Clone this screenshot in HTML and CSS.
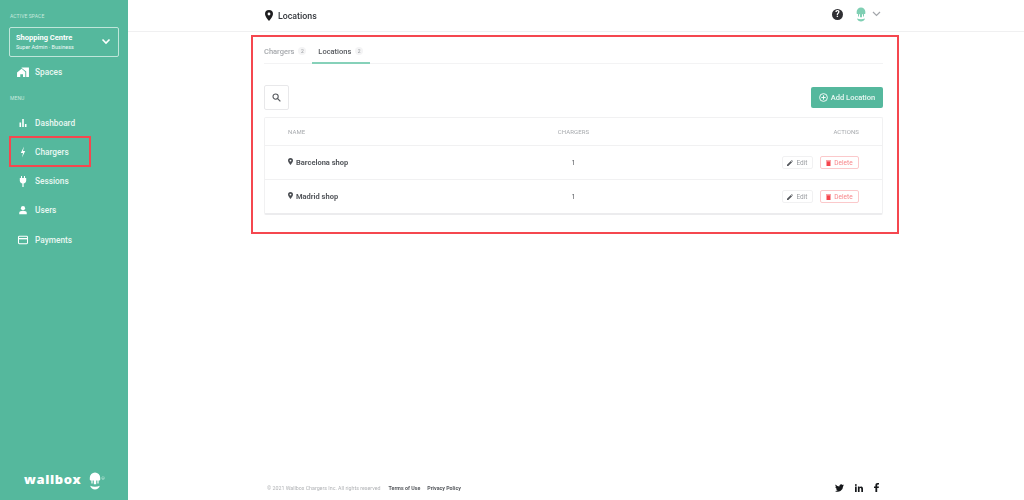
FILE: index.html
```html
<!DOCTYPE html>
<html lang="en">
<head>
<meta charset="utf-8">
<title>Locations</title>
<link rel="stylesheet" href="styles.css">
</head>
<body>
<div class="app">
  <aside class="sidebar">
    <div class="side-label first">ACTIVE SPACE</div>
    <div class="space">
      <div>
        <div class="space-name">Shopping Centre</div>
        <div class="space-role">Super Admin · Business</div>
      </div>
      <svg class="space-chev" width="10" height="7" viewBox="0 0 10 7"><path d="M1.500 1.500 5 5l3.500-3.500" fill="none" stroke="#fff" stroke-width="1.600"/></svg>
    </div>
    <a class="nav spaces"><svg class="nav-ico" width="12" height="11" viewBox="0 0 13 12"><path d="M0 6 5 2l4 3.500V11H6.500V8h-3v3H0zM5 0.500h8V11h-3V5L5 1z" fill="#fff"/></svg>Spaces</a>
    <div class="side-label menu">MENU</div>
    <a class="nav"><svg class="nav-ico" width="12" height="8" viewBox="0 0 12 8"><path d="M2.500 3.500h1.600V8H2.500zM5.200 0h1.600v8H5.200zM7.900 5h1.600v3H7.900z" fill="#fff"/></svg>Dashboard</a>
    <a class="nav"><svg class="nav-ico" width="12" height="12" viewBox="0 0 12 12"><path d="M7 0.500 3.800 7H6l-1 4.500L8.200 5H6z" fill="#fff"/></svg>Chargers</a>
    <a class="nav"><svg class="nav-ico" width="12" height="11" viewBox="-1.500 0 15 13.750"><path d="M3.500 0h1.300v2.500h2.400V0h1.300v2.500H10V6C10 8 8 9.200 6.800 9.400V13.700H5.200V9.400C4 9.200 2 8 2 6V2.500h1.500z" fill="#fff"/></svg>Sessions</a>
    <a class="nav"><svg class="nav-ico" width="12" height="12" viewBox="-2 -2 16 16"><circle cx="6" cy="3.500" r="2.800" fill="#fff"/><path d="M1 11.500V9.500C1 8 3.500 7 6 7s5 1 5 2.500v2z" fill="#fff"/></svg>Users</a>
    <a class="nav"><svg class="nav-ico" width="12" height="12" viewBox="-.5 -.5 13 13"><rect x="1.100" y="2" width="9.800" height="8" rx="1" fill="none" stroke="#fff" stroke-width="1.100"/><path d="M1 3.800h10v1.500H1z" fill="#fff"/></svg>Payments</a>
    <div class="brand">
      <span class="brand-word">wallbox</span>
      <svg width="12" height="18" viewBox="0 0 15 22"><path d="M1 9V7a6.500 6.500 0 0 1 13 0v2c0 1-1 1.500-2 1.300V14h-1.500v-3.500H9V15H6v-4.500H4.500V14H3v-3.700C2 10.500 1 10 1 9z" fill="#fff"/><path d="M1.500 17c3.500 1.500 8.500 1.500 12 0-.5 3-3.500 4.500-6 4.500s-5.500-1.500-6-4.500z" fill="#fff"/></svg>
      <span class="brand-r">®</span>
    </div>
  </aside>
  <div class="main">
    <header class="topbar">
      <div class="page-title">
        <svg width="8" height="11" viewBox="0 0 8 11"><path fill-rule="evenodd" d="M4 0a4 4 0 0 1 4 4c0 2.500-2.500 5-4 7-1.500-2-4-4.500-4-7a4 4 0 0 1 4-4zm0 2.600a1.400 1.400 0 1 0 0 2.800 1.400 1.400 0 0 0 0-2.800z" fill="#1d1d1f"/></svg>
        <span>Locations</span>
      </div>
      <div class="top-actions">
        <span class="help">?</span>
        <svg class="avatar" width="10" height="15" viewBox="0 0 15 22"><path d="M1 9V7a6.500 6.500 0 0 1 13 0v2c0 1-1 1.500-2 1.300V14h-1.500v-3.500H9V15H6v-4.500H4.500V14H3v-3.700C2 10.500 1 10 1 9z" fill="#7fcfb3"/><path d="M1.500 17c3.500 1.500 8.500 1.500 12 0-.5 3-3.500 4.500-6 4.500s-5.500-1.500-6-4.500z" fill="#7fcfb3"/></svg>
        <svg width="9" height="6" viewBox="0 0 9 6"><path d="M1 1l3.500 3.500L8 1" fill="none" stroke="#a3a6ab" stroke-width="1.200"/></svg>
      </div>
    </header>
    <main class="content">
      <nav class="tabs">
        <a class="tab">Chargers <span class="count">2</span></a>
        <a class="tab active">Locations <span class="count">2</span></a>
      </nav>
      <div class="toolbar">
        <button class="search-btn"><svg width="9" height="9" viewBox="0 0 10 10"><circle cx="4" cy="4" r="2.900" fill="none" stroke="#55585d" stroke-width="1.200"/><path d="M6 6l3.300 3.300" stroke="#55585d" stroke-width="1.400"/></svg></button>
        <button class="add-btn"><svg width="9" height="9" viewBox="0 0 9 9"><circle cx="4.500" cy="4.500" r="3.900" fill="none" stroke="#fff" stroke-width=".9"/><path d="M4.500 2.300v4.400M2.300 4.500h4.400" stroke="#fff" stroke-width=".9"/></svg>Add Location</button>
      </div>
      <section class="table">
        <div class="row head">
          <div class="c-name">NAME</div>
          <div class="c-chargers">CHARGERS</div>
          <div class="c-actions">ACTIONS</div>
        </div>
        <div class="row item">
          <div class="c-name loc"><svg width="5" height="7" viewBox="0 0 8 11"><path fill-rule="evenodd" d="M4 0a4 4 0 0 1 4 4c0 2.500-2.500 5-4 7-1.500-2-4-4.500-4-7a4 4 0 0 1 4-4zm0 2.600a1.400 1.400 0 1 0 0 2.800 1.400 1.400 0 0 0 0-2.800z" fill="#4a4d52"/></svg>Barcelona shop</div>
          <div class="c-chargers num">1</div>
          <div class="c-actions btns">
            <button class="act edit"><svg width="6" height="6" viewBox="0 0 6 6"><path d="M0 6V4.700L3.800.9 5.100 2.200 1.300 6zM4.200.5 4.700 0 6 1.300l-.5.500z" fill="#55585d"/></svg>Edit</button>
            <button class="act del"><svg width="5" height="6" viewBox="0 0 5 6"><path d="M0 .6h5v.7H0zM.5 1.600h4V6h-4z" fill="#f5454d"/></svg>Delete</button>
          </div>
        </div>
        <div class="row item">
          <div class="c-name loc"><svg width="5" height="7" viewBox="0 0 8 11"><path fill-rule="evenodd" d="M4 0a4 4 0 0 1 4 4c0 2.500-2.500 5-4 7-1.500-2-4-4.500-4-7a4 4 0 0 1 4-4zm0 2.600a1.400 1.400 0 1 0 0 2.800 1.400 1.400 0 0 0 0-2.800z" fill="#4a4d52"/></svg>Madrid shop</div>
          <div class="c-chargers num">1</div>
          <div class="c-actions btns">
            <button class="act edit"><svg width="6" height="6" viewBox="0 0 6 6"><path d="M0 6V4.700L3.800.9 5.100 2.200 1.300 6zM4.200.5 4.700 0 6 1.300l-.5.500z" fill="#55585d"/></svg>Edit</button>
            <button class="act del"><svg width="5" height="6" viewBox="0 0 5 6"><path d="M0 .6h5v.7H0zM.5 1.600h4V6h-4z" fill="#f5454d"/></svg>Delete</button>
          </div>
        </div>
      </section>
    </main>
    <footer class="footer">
      <div class="legal">
        <span>© 2021 Wallbox Chargers Inc. All rights reserved</span>
        <a class="legal-link first-link">Terms of Use</a>
        <a class="legal-link">Privacy Policy</a>
      </div>
      <div class="social">
        <svg width="9" height="8" viewBox="0 0 24 20"><path d="M24 2.400c-.9.400-1.800.7-2.800.8 1-.6 1.800-1.600 2.200-2.700-1 .6-2 1-3.100 1.200A4.900 4.900 0 0 0 11.900 6.200C7.800 6 4.200 4 1.700.9.400 3.100 1 6 3.200 7.500c-.8 0-1.600-.2-2.200-.6 0 2.300 1.600 4.400 3.900 4.900-.7.200-1.500.2-2.200.1.600 2 2.500 3.400 4.600 3.400A9.900 9.900 0 0 1 0 17.800 14 14 0 0 0 21.500 5.400c1-.7 1.800-1.700 2.500-3z" fill="#15171a"/></svg>
        <svg width="8" height="8" viewBox="0 0 8 8"><path d="M0 2.600h1.700V8H0zM.85 0a.95.95 0 1 1 0 1.900.95.95 0 0 1 0-1.900zM2.900 2.600h1.600v.8c.3-.5.9-.9 1.700-.9C7.500 2.500 8 3.500 8 5v3H6.300V5.300c0-.7-.2-1.300-.9-1.300s-.8.600-.8 1.300V8H2.900z" fill="#15171a"/></svg>
        <svg width="5" height="9" viewBox="0 0 5 9"><path d="M1.400 9V5H0V3.400h1.400V2.300C1.400.8 2.200 0 3.600 0H5v1.600H4c-.6 0-.8.300-.8.800v1H5L4.700 5H3.200v4z" fill="#15171a"/></svg>
      </div>
    </footer>
  </div>
</div>
<div class="mark mark-nav"></div>
<div class="mark mark-content"></div>
</body>
</html>
```

FILE: styles.css
```css
* { box-sizing: border-box; }
html, body { margin: 0; padding: 0; height: 100%; }
body {
  font-family: Roboto, "Liberation Sans", sans-serif;
  color: #2b2e33;
  background: #fff;
  overflow: hidden;
}
button { font-family: inherit; cursor: pointer; }
.app { display: flex; height: 500px; width: 1024px; filter: blur(.3px); }

.sidebar {
  width: 128px;
  flex: none;
  background: #55b89d;
  color: #fff;
  display: flex;
  flex-direction: column;
  padding-left: 9px;
}
.side-label { font-size: 5px; line-height: 6px; color: #c9e9df; letter-spacing: .1px; margin-left: 1px; }
.side-label.first { margin-top: 13px; }
.side-label.menu { margin-top: 17px; margin-bottom: 16px; }
.space {
  width: 110px;
  height: 30px;
  margin-top: 8px;
  border: 1px solid #bfe6da;
  border-radius: 2px;
  display: flex;
  align-items: center;
  justify-content: space-between;
  padding: 0 7px 2px 6px;
}
.space-name { font-size: 7.500px; line-height: 11px; font-weight: 700; }
.space-role { font-size: 5.500px; line-height: 8px; color: #eef9f5; }
.nav {
  display: flex;
  align-items: center;
  height: 12px;
  margin: 0 0 17.150px 0;
  padding-left: 8px;
  font-size: 8.300px;
  font-weight: 500;
  color: #e9f7f2;
}
.nav.spaces { margin: 9px 0 0; }
.nav-ico { margin-right: 6px; flex: none; }
.brand { margin-top: auto; margin-bottom: 9px; padding-left: 15px; display: flex; align-items: center; gap: 8px; }
.brand-word { font-family: "Open Sans", sans-serif; font-size: 13px; line-height: 18px; font-weight: 800; letter-spacing: .6px; margin-bottom: 3px; }
.brand-r { font-size: 4px; margin-left: -8px; margin-bottom: 5px; color: #d5efe7; }

.main { flex: 1; min-width: 0; display: flex; flex-direction: column; }
.topbar {
  height: 32px;
  flex: none;
  border-bottom: 1px solid #f0f0f1;
  display: flex;
  align-items: center;
  justify-content: space-between;
  padding: 0 143px 0 137px;
}
.page-title { display: flex; align-items: center; gap: 5px; font-size: 8.800px; font-weight: 500; color: #33363b; }
.top-actions { display: flex; align-items: center; margin-bottom: 3px; }
.help {
  width: 11px; height: 11px; border-radius: 50%;
  background: #2f2f33; color: #fff;
  font-size: 9px; font-weight: 700; line-height: 11px; text-align: center;
  margin-right: 13px;
}
.avatar { margin-right: 6px; }

.content { width: 619px; margin-left: 136px; flex: 1; }
.tabs { height: 32px; padding-top: 13px; border-bottom: 1px solid #f3f3f4; display: flex; }
.tab {
  height: 19px;
  font-size: 7.500px;
  line-height: 14px;
  font-weight: 500;
  color: #a6a9ad;
  margin-right: 6px;
  white-space: nowrap;
}
.tab.active {
  color: #55585d;
  border-bottom: 2px solid #86d1b9;
  padding: 0 6px;
  width: 58px;
  margin-right: 0;
}
.count {
  display: inline-block;
  width: 8px; height: 8px; border-radius: 50%;
  background: #f4f4f5; color: #a6a9ad;
  font-size: 5px; line-height: 8px; text-align: center;
  margin-left: 2px; vertical-align: 1px;
}
.toolbar { display: flex; justify-content: space-between; align-items: center; margin-top: 21px; height: 24px; }
.search-btn {
  width: 25px; height: 25px;
  background: #fff;
  border: 1px solid #e8e8ea;
  border-radius: 2px;
  padding: 0;
  display: flex; align-items: center; justify-content: center;
}
.add-btn {
  width: 72px; height: 21px;
  background: #55b89d;
  color: #eaf7f3;
  border: 0; border-radius: 2px;
  font-size: 7.500px; font-weight: 500;
  padding: 0;
  display: flex; align-items: center; justify-content: center; gap: 3px;
}
.table {
  margin-top: 8px;
  border: 1px solid #f1f1f2;
  border-bottom: 2px solid #ececee;
  border-radius: 2px;
}
.row { display: grid; grid-template-columns: 1fr 1fr 1fr; align-items: center; padding: 0 23px; }
.row.head { height: 27px; }
.row.item { height: 34px; border-top: 1px solid #f1f1f2; }
.head > div { font-size: 6px; color: #a6a9ad; letter-spacing: .1px; }
.c-chargers { text-align: center; }
.c-actions { text-align: right; }
.loc { font-size: 7.500px; font-weight: 700; color: #55585d; display: flex; align-items: center; gap: 3px; }
.loc svg { margin-top: -2px; }
.num { font-size: 7px; color: #55585d; }
.btns { display: flex; justify-content: flex-end; gap: 7px; }
.act {
  height: 13px;
  background: #fff;
  border-radius: 2px;
  font-size: 6.500px;
  padding: 0;
  display: flex; align-items: center; justify-content: center; gap: 3px;
}
.edit { width: 31px; border: 1px solid #f1f1f2; color: #9a9da1; }
.del { width: 39px; border: 1px solid #fbc9cb; color: #f7858a; }

.footer {
  height: 31px;
  flex: none;
  display: flex;
  align-items: center;
  justify-content: space-between;
  padding: 6px 145px 0 139px;
}
.legal { font-size: 5.300px; color: #b0b2b5; display: flex; }
.legal-link { color: #55585d; font-weight: 700; margin-left: 7px; }
.legal-link.first-link { margin-left: 8px; }
.social { display: flex; align-items: center; gap: 11px; }

.mark { position: absolute; border: 2px solid #f5474f; pointer-events: none; }
.mark-nav { left: 9px; top: 136px; width: 82px; height: 31px; }
.mark-content { left: 251px; top: 35px; width: 648px; height: 199px; }
```
